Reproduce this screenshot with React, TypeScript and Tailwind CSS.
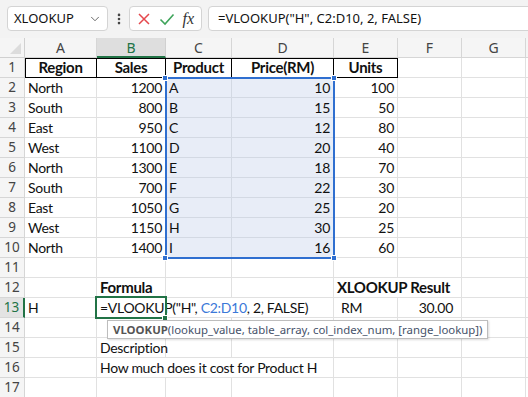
import { ChevronDown, EllipsisVertical } from "lucide-react";

const cols = ["A", "B", "C", "D", "E", "F", "G", ""];

const data: [string, string, string, string, string][] = [
  ["North", "1200", "A", "10", "100"],
  ["South", "800", "B", "15", "50"],
  ["East", "950", "C", "12", "80"],
  ["West", "1100", "D", "20", "40"],
  ["North", "1300", "E", "18", "70"],
  ["South", "700", "F", "22", "30"],
  ["East", "1050", "G", "25", "20"],
  ["West", "1150", "H", "30", "25"],
  ["North", "1400", "I", "16", "60"],
];

const cell = "h-5 border-r border-b border-[#e1e1e1] px-[3px] leading-[19px] whitespace-nowrap overflow-visible";
const sel = "h-5 border-r border-b border-[#d3d9e3] bg-[#e8edf7] px-[3px] leading-[19px] whitespace-nowrap";

function RowHead({ n, active }: { n: number; active?: boolean }) {
  return (
    <div
      className={
        active
          ? "h-5 border-b border-[#d6d6d6] border-r-2 border-r-[#217346] bg-[#e3e3e3] text-center text-[13.5px] tracking-normal leading-[19px] text-[#217346] font-['Noto_Sans']"
          : "h-5 border-r border-b border-[#d6d6d6] bg-[#f5f5f5] text-center text-[13.5px] tracking-normal leading-[19px] text-[#444] font-['Noto_Sans']"
      }
    >
      {n}
    </div>
  );
}

function Blank({ n }: { n: number }) {
  return (
    <>
      {Array.from({ length: n }).map((_, i) => (
        <div key={i} className={cell} />
      ))}
    </>
  );
}

export default function App() {
  return (
    <div className="w-[528px] h-[397px] overflow-hidden bg-white text-[14px] text-[#111] font-['Lato',sans-serif]">
      {/* formula bar */}
      <div className="h-[38px] bg-[#f3f3f3] flex items-start pt-[6px] pl-[7px] font-['Noto_Sans',sans-serif]">
        <div className="w-[101px] h-[25px] shrink-0 bg-white border border-[#d4d4d4] rounded-[4px] flex items-center pl-[6px] pr-[5px] text-[13px] text-[#111]">
          <span className="flex-1">XLOOKUP</span>
          <ChevronDown size={14} strokeWidth={1.5} className="text-[#555]" />
        </div>
        <div className="w-[21px] h-[25px] shrink-0 flex items-center justify-center">
          <EllipsisVertical size={14} strokeWidth={2.5} className="text-[#444]" />
        </div>
        <div className="w-[73px] h-[25px] shrink-0 bg-white border border-[#d4d4d4] rounded-[4px] flex items-center justify-around px-[3px]">
          <svg width="14" height="14" viewBox="0 0 14 14">
            <path d="M2 2 L12 12 M12 2 L2 12" stroke="#e5484d" strokeWidth="1.5" fill="none" />
          </svg>
          <svg width="16" height="14" viewBox="0 0 16 14">
            <path d="M1.5 7.5 L6 12 L14.5 2.5" stroke="#3fa45b" strokeWidth="1.6" fill="none" />
          </svg>
          <span className="font-['Liberation_Serif',serif] italic text-[16px] text-[#333] leading-none">fx</span>
        </div>
        <div className="ml-[6px] w-[330px] h-[25px] shrink-0 bg-white border border-[#d4d4d4] rounded-[4px] flex items-center pl-[9px] text-[13px] text-[#111] whitespace-nowrap">
          =VLOOKUP("H", C2:D10, 2, FALSE)
        </div>
      </div>

      {/* sheet */}
      <div className="relative tracking-[-0.3px]">
        <div className="grid grid-cols-[25px_72px_69px_66px_102px_64px_64px_64px_100px]">
          {/* header row */}
          <div className="h-5 border-r border-b border-[#d0d0d0] bg-[#f5f5f5] relative">
            <svg className="absolute right-[3px] bottom-[3px]" width="11" height="11" viewBox="0 0 11 11">
              <path d="M11 0 L11 11 L0 11 Z" fill="#dcdcdc" />
            </svg>
          </div>
          {cols.map((c, i) =>
            c === "B" ? (
              <div key={i} className="h-5 border-r border-[#d0d0d0] border-b-2 border-b-[#217346] bg-[#dedede] text-center text-[14px] tracking-normal leading-[19px] text-[#217346] font-['Noto_Sans']">
                {c}
              </div>
            ) : (
              <div key={i} className="h-5 border-r border-b border-[#d6d6d6] bg-[#f5f5f5] text-center text-[14px] tracking-normal leading-[19px] text-[#444] font-['Noto_Sans']">
                {c}
              </div>
            )
          )}

          {/* row 1 */}
          <RowHead n={1} />
          {["Region", "Sales", "Product", "Price(RM)", "Units"].map((t, i) => (
            <div
              key={t}
              className={
                "h-5 border-r border-b border-black text-center font-bold text-[15px] leading-[19px] " +
                (i === 0 ? "shadow-[inset_1px_1px_0_#000]" : "shadow-[inset_0_1px_0_#000]")
              }
            >
              {t}
            </div>
          ))}
          <Blank n={3} />

          {/* rows 2-10 */}
          {data.map((r, i) => (
            <div key={i} className="contents">
              <RowHead n={i + 2} />
              <div className={cell}>{r[0]}</div>
              <div className={cell + " text-right"}>{r[1]}</div>
              <div className={sel}>{r[2]}</div>
              <div className={sel + " text-right"}>{r[3]}</div>
              <div className={cell + " text-right"}>{r[4]}</div>
              <Blank n={3} />
            </div>
          ))}

          {/* row 11 */}
          <RowHead n={11} />
          <Blank n={8} />

          {/* row 12 */}
          <RowHead n={12} />
          <div className={cell} />
          <div className={cell + " font-bold text-[15px]"}>Formula</div>
          <Blank n={2} />
          <div className={cell + " col-span-2 font-bold text-[15px]"}>XLOOKUP Result</div>
          <Blank n={2} />

          {/* row 13 */}
          <RowHead n={13} active />
          <div className={cell}>H</div>
          <div className={cell + " col-span-3"}>
            =VLOOKUP("H", <span className="text-[#3b78d8]">C2:D10</span>, 2, FALSE)
          </div>
          <div className={cell + " pl-[7px]"}>RM</div>
          <div className={cell + " text-right pr-[8px]"}>30.00</div>
          <Blank n={2} />

          {/* row 14 */}
          <RowHead n={14} />
          <Blank n={8} />

          {/* row 15 */}
          <RowHead n={15} />
          <div className={cell} />
          <div className={cell}>Description</div>
          <Blank n={6} />

          {/* row 16 */}
          <RowHead n={16} />
          <div className={cell} />
          <div className={cell + " col-span-3"}>How much does it cost for Product H</div>
          <Blank n={4} />

          {/* row 17 */}
          <RowHead n={17} />
          <Blank n={8} />
        </div>

        {/* range selection C2:D10 */}
        <div className="absolute left-[165px] top-[39px] w-[170px] h-[182px] border-2 border-[#2f6fd0]" />
        <div className="absolute left-[162px] top-[37px] w-[6px] h-[6px] bg-[#2f6fd0] border border-white" />
        <div className="absolute left-[331px] top-[37px] w-[6px] h-[6px] bg-[#2f6fd0] border border-white" />
        <div className="absolute left-[162px] top-[217px] w-[6px] h-[6px] bg-[#2f6fd0] border border-white" />
        <div className="absolute left-[331px] top-[217px] w-[6px] h-[6px] bg-[#2f6fd0] border border-white" />

        {/* active cell B13 */}
        <div className="absolute left-[95px] top-[258px] w-[72px] h-[23px] border-2 border-[#217346]" />
        <div className="absolute left-[162px] top-[277px] w-[6px] h-[6px] bg-[#217346] border border-white" />

        {/* function tooltip */}
        <div className="absolute left-[107px] top-[282px] h-[19px] w-[381px] bg-white border border-[#bdbdbd] shadow-[1px_1px_2px_rgba(0,0,0,0.15)] pl-[5px] text-[11.4px] tracking-normal leading-[17px] whitespace-nowrap font-['Noto_Sans',sans-serif] text-[#46526a]">
          <span className="font-bold text-[#555]">VLOOKUP</span>(lookup_value, table_array, col_index_num, [range_lookup])
        </div>
      </div>
    </div>
  );
}
